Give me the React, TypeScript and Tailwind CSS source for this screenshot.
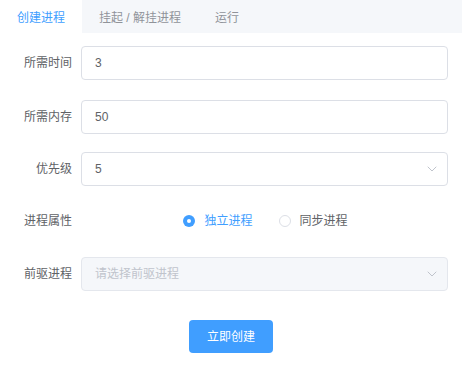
import React, { useState } from 'react';

type Tab = 'create' | 'suspend' | 'run';

const tabs: { id: Tab; label: string }[] = [
  { id: 'create', label: '创建进程' },
  { id: 'suspend', label: '挂起 / 解挂进程' },
  { id: 'run', label: '运行' },
];

const Chevron: React.FC = () => (
  <svg width="10" height="6" viewBox="0 0 10 6" fill="none" className="shrink-0">
    <path d="M1 1l4 4 4-4" stroke="#c0c4cc" strokeWidth="1" strokeLinecap="round" strokeLinejoin="round" />
  </svg>
);

const Row: React.FC<{ label: string; children: React.ReactNode; className?: string }> = ({ label, children, className }) => (
  <div className={`flex items-center ${className ?? ''}`}>
    <label className="w-[72px] shrink-0 text-right text-[12px] text-[#606266]">{label}</label>
    <div className="ml-[9px] flex-1">{children}</div>
  </div>
);

const Radio: React.FC<{ checked: boolean; label: string; onClick: () => void }> = ({ checked, label, onClick }) => (
  <button onClick={onClick} className="flex items-center gap-[9px]">
    {checked ? (
      <span className="flex h-[12px] w-[12px] items-center justify-center rounded-full bg-[#409eff]">
        <span className="h-[4px] w-[4px] rounded-full bg-white" />
      </span>
    ) : (
      <span className="h-[12px] w-[12px] rounded-full border border-[#dcdfe6] bg-white" />
    )}
    <span className={checked ? 'text-[#409eff]' : 'text-[#606266]'}>{label}</span>
  </button>
);

const App: React.FC = () => {
  const [tab, setTab] = useState<Tab>('create');
  const [time, setTime] = useState('3');
  const [mem, setMem] = useState('50');
  const [kind, setKind] = useState<'alone' | 'sync'>('alone');

  return (
    <div
      className="h-[385px] w-[462px] bg-white"
      style={{ fontFamily: '"Liberation Sans", Arial, "Noto Sans CJK SC", sans-serif' }}
    >
      {/* tab bar */}
      <div className="flex h-[33px] bg-[#f5f7fa]">
        {tabs.map((t) => (
          <button
            key={t.id}
            onClick={() => setTab(t.id)}
            className={`h-[33px] px-[17px] pt-[2px] text-[12px] ${
              tab === t.id ? 'bg-white text-[#409eff]' : 'text-[#909399]'
            }`}
          >
            {t.label}
          </button>
        ))}
      </div>

      <div className="pr-[14px] pt-[13px]">
        <Row label="所需时间">
          <input
            value={time}
            onChange={(e) => setTime(e.target.value)}
            className="h-[34px] w-full rounded-[4px] border border-[#dcdfe6] px-[13px] text-[12px] text-[#606266] outline-none"
          />
        </Row>
        <Row label="所需内存" className="mt-[20px]">
          <input
            value={mem}
            onChange={(e) => setMem(e.target.value)}
            className="h-[34px] w-full rounded-[4px] border border-[#dcdfe6] px-[13px] text-[12px] text-[#606266] outline-none"
          />
        </Row>
        <Row label="优先级" className="mt-[18px]">
          <div className="flex h-[34px] w-full items-center justify-between rounded-[4px] border border-[#dcdfe6] pl-[13px] pr-[10px] text-[12px] text-[#606266]">
            <span>5</span>
            <Chevron />
          </div>
        </Row>
        <Row label="进程属性" className="mt-[18px] h-[34px]">
          <div className="flex items-center justify-center gap-[26px] pl-[2px] text-[12px]">
            <Radio checked={kind === 'alone'} label="独立进程" onClick={() => setKind('alone')} />
            <Radio checked={kind === 'sync'} label="同步进程" onClick={() => setKind('sync')} />
          </div>
        </Row>
        <Row label="前驱进程" className="mt-[19px]">
          <div className="flex h-[34px] w-full cursor-not-allowed items-center justify-between rounded-[4px] border border-[#e4e7ed] bg-[#f5f7fa] pl-[13px] pr-[10px] text-[12px] text-[#c0c4cc]">
            <span>请选择前驱进程</span>
            <Chevron />
          </div>
        </Row>

        <div className="mt-[29px] flex justify-center pl-[14px]">
          <button className="h-[33px] w-[84px] rounded-[4px] bg-[#409eff] text-[12px] text-white">立即创建</button>
        </div>
      </div>
    </div>
  );
};

export default App;
